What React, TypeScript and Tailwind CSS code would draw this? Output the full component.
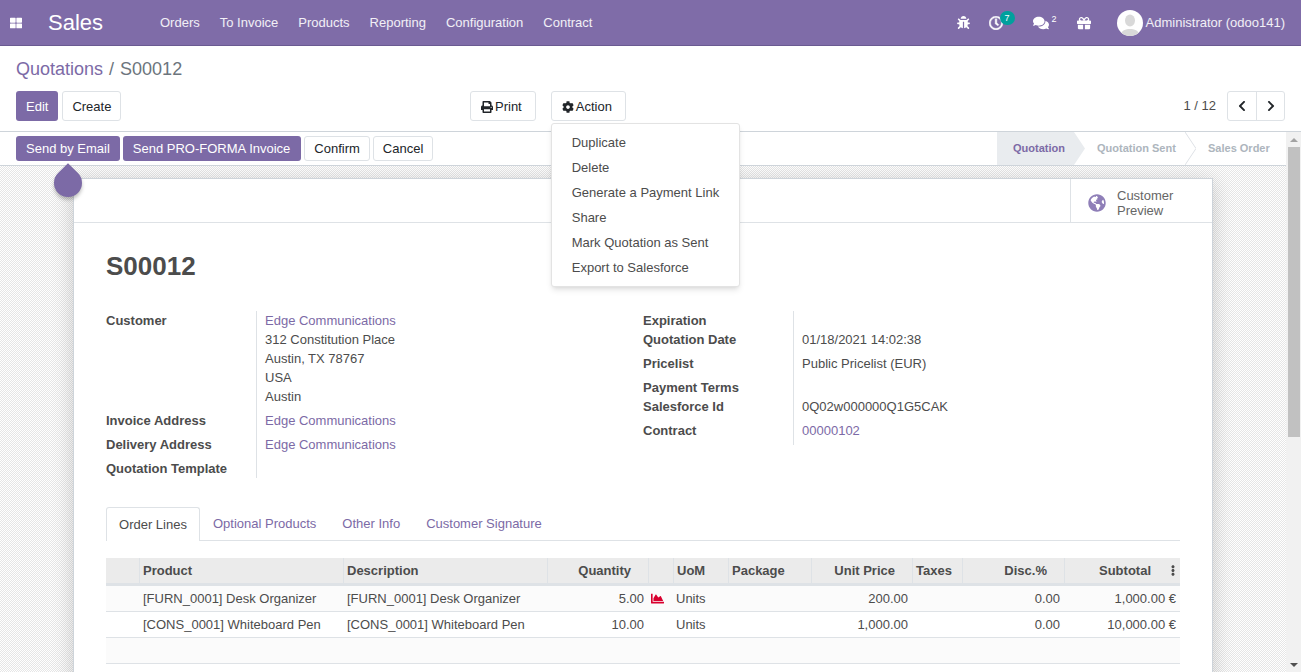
import {
  FaBug,
  FaChartArea,
  FaChevronLeft,
  FaChevronRight,
  FaCog,
  FaComments,
  FaEllipsisV,
  FaGift,
  FaGlobeAmericas,
  FaPrint,
  FaRegClock,
  FaThLarge,
} from 'react-icons/fa';

const menus = ['Orders', 'To Invoice', 'Products', 'Reporting', 'Configuration', 'Contract'];
const actions = [
  'Duplicate',
  'Delete',
  'Generate a Payment Link',
  'Share',
  'Mark Quotation as Sent',
  'Export to Salesforce',
];

const btnWhite = 'h-[30px] pt-[1px] flex items-center bg-white border border-[#dee2e6] rounded-[3px] text-[#212529]';
const btnPurple = 'h-[25px] px-[10px] flex items-center bg-[#7c6aa6] rounded-[3px] text-white';
const btnPurpleLight = 'h-[25px] px-[9px] flex items-center bg-white border border-[#dee2e6] rounded-[3px] text-[#212529]';

function Navbar() {
  return (
    <header className="h-[46px] shrink-0 bg-[#7f6ca8] border-b border-[#6a5a91] flex items-center text-white">
      <FaThLarge className="ml-[10px] w-[12px] h-[12px]" />
      <span className="ml-[26px] w-[112px] text-[22px]">Sales</span>
      <nav className="flex gap-[20px] text-[13px] text-white/90">
        {menus.map((m) => (
          <span key={m}>{m}</span>
        ))}
      </nav>
      <div className="ml-auto flex items-center pr-[16px] text-[13px]">
        <FaBug className="w-[13px] h-[13px]" />
        <div className="relative ml-[19px] w-[32px] h-[16px]">
          <FaRegClock className="w-[14px] h-[14px] mt-[1px] stroke-[20px]" />
          <span className="absolute left-[11px] -top-[4px] w-[15px] h-[14px] rounded-full bg-[#00a09d] text-[9px] leading-[14px] text-center">
            7
          </span>
        </div>
        <FaComments className="ml-[12px] w-[16px] h-[16px]" />
        <span className="relative -top-[3px] ml-[3px] text-[9px]">2</span>
        <FaGift className="ml-[20px] w-[14px] h-[14px]" />
        <div className="ml-[26px] w-[26px] h-[26px] rounded-full bg-white overflow-hidden">
          <svg viewBox="0 0 26 26" className="w-full h-full">
            <ellipse cx="13" cy="10.5" rx="5" ry="6" fill="#d9d9d9" />
            <path d="M3 26c1-6 6-7 10-7s9 1 10 7z" fill="#d9d9d9" />
          </svg>
        </div>
        <span className="ml-[3px] text-white/90">Administrator (odoo141)</span>
      </div>
    </header>
  );
}

function ControlPanel() {
  return (
    <div className="h-[86px] shrink-0 px-[16px] pt-[11px] border-b border-[#ced4da] text-[13px]">
      <div className="text-[18px] leading-[25px]">
        <span className="text-[#7c6aa6]">Quotations</span>
        <span className="ml-[6px] text-[#6c757d]">/</span>
        <span className="ml-[6px] text-[#6c757d]">S00012</span>
      </div>
      <div className="mt-[9px] flex items-center">
        <div className="w-[454px] flex gap-[4px]">
          <button className="h-[30px] pt-[1px] px-[10px] bg-[#7c6aa6] rounded-[3px] text-white">Edit</button>
          <button className={btnWhite + ' px-[9px]'}>Create</button>
        </div>
        <div className="flex gap-[15px]">
          <button className={btnWhite + ' pl-[10px] pr-[13px] gap-[2px]'}>
            <FaPrint className="w-[12px] h-[12px]" />
            Print
          </button>
          <div className="relative">
            <button className={btnWhite + ' pl-[10px] pr-[13px] gap-[2px]'}>
              <FaCog className="w-[12px] h-[12px]" />
              Action
            </button>
            <ul className="absolute z-20 left-0 top-[32px] w-[189px] py-[6px] bg-white border border-[#e3e3e3] rounded-[3px] shadow-md text-[#4c4c4c]">
              {actions.map((a) => (
                <li key={a} className="h-[25px] pl-[20px] leading-[25px]">
                  {a}
                </li>
              ))}
            </ul>
          </div>
        </div>
        <div className="ml-auto flex items-center">
          <span className="mr-[11px] text-[#4c4c4c]">1 / 12</span>
          <div className="flex h-[30px] border border-[#dee2e6] rounded-[3px] text-[#212529]">
            <span className="w-[29px] flex items-center justify-center border-r border-[#dee2e6]">
              <FaChevronLeft className="w-[12px] h-[12px]" />
            </span>
            <span className="w-[27px] flex items-center justify-center">
              <FaChevronRight className="w-[12px] h-[12px]" />
            </span>
          </div>
        </div>
      </div>
    </div>
  );
}

function StatusBar() {
  return (
    <div className="relative z-10 h-[34px] shrink-0 flex items-center border-b border-[#ced4da] bg-white pl-[16px] text-[13px]">
      <div className="flex gap-[3px]">
        <button className={btnPurple}>Send by Email</button>
        <button className={btnPurple + ' pr-[11px]'}>Send PRO-FORMA Invoice</button>
        <button className={btnPurpleLight}>Confirm</button>
        <button className={btnPurpleLight}>Cancel</button>
      </div>
      <div className="absolute right-0 top-0 h-[33px] w-[289px] flex text-[11px] font-bold text-[#adb5bd]">
        <span className="relative w-[77px] pl-[16px] leading-[33px] bg-[#e9ecef] text-[#7c6aa6] whitespace-nowrap">
          Quotation
          <svg viewBox="0 0 11 33" className="absolute -right-[11px] top-0 w-[11px] h-[33px]">
            <path d="M0 0l11 16.500-11 16.500z" fill="#e9ecef" />
          </svg>
        </span>
        <span className="relative w-[111px] pl-[23px] leading-[33px] whitespace-nowrap">
          Quotation Sent
          <svg viewBox="0 0 11 33" className="absolute -right-[11px] top-0 w-[11px] h-[33px]">
            <path d="M0 0l11 16.500-11 16.500" fill="none" stroke="#dee2e6" />
          </svg>
        </span>
        <span className="pl-[23px] leading-[33px] whitespace-nowrap">Sales Order</span>
      </div>
    </div>
  );
}

function FormRow({ label, h, children }: { label: string; h: string; children?: React.ReactNode }) {
  return (
    <div className={'flex ' + h}>
      <div className="w-[150px] shrink-0 font-bold leading-[19px] text-[#4c4c4c]">{label}</div>
      <div className="flex-1 border-l border-[#dee2e6] pl-[8px] leading-[19px] text-[#4c4c4c]">{children}</div>
    </div>
  );
}

const link = 'text-[#7c6aa6]';

function FormHeader() {
  return (
    <div className="mt-[29px] flex text-[13px]">
      <div className="w-[537px] shrink-0">
        <FormRow label="Customer" h="h-[100px]">
          <div className={link}>Edge Communications</div>
          <div>312 Constitution Place</div>
          <div>Austin, TX 78767</div>
          <div>USA</div>
          <div>Austin</div>
        </FormRow>
        <FormRow label="Invoice Address" h="h-[24px]">
          <span className={link}>Edge Communications</span>
        </FormRow>
        <FormRow label="Delivery Address" h="h-[24px]">
          <span className={link}>Edge Communications</span>
        </FormRow>
        <FormRow label="Quotation Template" h="h-[19px]" />
      </div>
      <div className="flex-1">
        <FormRow label="Expiration" h="h-[19px]" />
        <FormRow label="Quotation Date" h="h-[24px]">
          01/18/2021 14:02:38
        </FormRow>
        <FormRow label="Pricelist" h="h-[24px]">
          Public Pricelist (EUR)
        </FormRow>
        <FormRow label="Payment Terms" h="h-[19px]" />
        <FormRow label="Salesforce Id" h="h-[24px]">
          0Q02w000000Q1G5CAK
        </FormRow>
        <FormRow label="Contract" h="h-[24px]">
          <span className={link}>00000102</span>
        </FormRow>
      </div>
    </div>
  );
}

function Tabs() {
  return (
    <div className="mt-[29px] h-[34px] flex border-b border-[#dee2e6] text-[13px]">
      <span className="h-[34px] w-[94px] bg-white border border-b-0 border-[#dee2e6] rounded-t-[3px] text-center leading-[33px] text-[#4c4c4c]">
        Order Lines
      </span>
      <span className={'ml-[13px] leading-[34px] ' + link}>Optional Products</span>
      <span className={'ml-[26px] leading-[34px] ' + link}>Other Info</span>
      <span className={'ml-[26px] leading-[34px] ' + link}>Customer Signature</span>
    </div>
  );
}

const th = 'h-[28px] pl-[3px] pr-[4px] font-bold text-left border-r border-b-[3px] border-r-[#dee2e6] border-b-[#dee2e6] bg-[#ebebeb]';
const td = 'h-[26px] px-[3px] font-normal border-b border-[#dee2e6]';
const tdNum = 'h-[26px] pl-[3px] pr-[5px] font-normal border-b border-[#dee2e6] text-right';

function OrderLines() {
  return (
    <table className="mt-[17px] w-[1074px] table-fixed border-separate border-spacing-0 text-[13px] text-[#4c4c4c]">
      <colgroup>
        <col className="w-[34px]" />
        <col className="w-[204px]" />
        <col className="w-[204px]" />
        <col className="w-[101px]" />
        <col className="w-[25px]" />
        <col className="w-[55px]" />
        <col className="w-[83px]" />
        <col className="w-[101px]" />
        <col className="w-[50px]" />
        <col className="w-[102px]" />
        <col className="w-[115px]" />
      </colgroup>
      <thead>
        <tr>
          <th className={th}></th>
          <th className={th}>Product</th>
          <th className={th}>Description</th>
          <th className={th + ' text-right pr-[17px]'}>Quantity</th>
          <th className={th}></th>
          <th className={th}>UoM</th>
          <th className={th}>Package</th>
          <th className={th + ' text-right pr-[17px]'}>Unit Price</th>
          <th className={th}>Taxes</th>
          <th className={th + ' text-right pr-[17px]'}>Disc.%</th>
          <th className="h-[28px] pl-[4px] pr-[1px] font-bold text-right border-b-[3px] border-[#dee2e6] bg-[#ebebeb]">
            <div className="flex items-center justify-end">
              Subtotal
              <FaEllipsisV className="ml-[16px] w-[12px] h-[11px]" />
            </div>
          </th>
        </tr>
      </thead>
      <tbody>
        <tr className="bg-[#fbfbfb]">
          <td className={td}></td>
          <td className={td + ' whitespace-nowrap'}>[FURN_0001] Desk Organizer</td>
          <td className={td + ' whitespace-nowrap'}>[FURN_0001] Desk Organizer</td>
          <td className={tdNum}>5.00</td>
          <td className={td}>
            <FaChartArea className="-ml-[2px] w-[15px] h-[13px] text-[#d9002f]" />
          </td>
          <td className={td + ' pl-[2px]'}>Units</td>
          <td className={td}></td>
          <td className={tdNum}>200.00</td>
          <td className={td}></td>
          <td className={tdNum}>0.00</td>
          <td className={td + ' text-right pr-[4px]'}>1,000.00 €</td>
        </tr>
        <tr className="bg-white">
          <td className={td}></td>
          <td className={td + ' whitespace-nowrap'}>[CONS_0001] Whiteboard Pen</td>
          <td className={td + ' whitespace-nowrap'}>[CONS_0001] Whiteboard Pen</td>
          <td className={tdNum}>10.00</td>
          <td className={td}></td>
          <td className={td + ' pl-[2px]'}>Units</td>
          <td className={td}></td>
          <td className={tdNum}>1,000.00</td>
          <td className={td}></td>
          <td className={tdNum}>0.00</td>
          <td className={td + ' text-right pr-[4px]'}>10,000.00 €</td>
        </tr>
        <tr className="bg-[#fbfbfb]">
          <td className={td} colSpan={11}></td>
        </tr>
      </tbody>
    </table>
  );
}

function Sheet() {
  return (
    <div className="relative flex-1 min-w-0 bg-[#f5f5f5] bg-[repeating-conic-gradient(#e6e6e6_0%_25%,#ffffff_0%_50%)] bg-[length:2px_2px] pt-[12px]">
      {/* ribbon drop */}
      <div className="absolute z-20 left-[54px] top-[3px] w-[28px] h-[28px] bg-[#7c6aa6] rounded-[50%_0_50%_50%] -rotate-45 shadow-[-2px_2px_4px_rgba(0,0,0,0.25)]"></div>
      <div className="ml-[73px] w-[1140px] h-[600px] bg-white border border-[#ced4da] shadow-[0_4px_20px_rgba(0,0,0,0.18)]">
        <div className="h-[44px] flex justify-end border-b border-[#dee2e6]">
          <div className="w-[142px] flex items-center border-l border-[#dee2e6] pt-[4px] pl-[17px] text-[13px] leading-[15px] text-[#666666]">
            <FaGlobeAmericas className="w-[18px] h-[18px] shrink-0 text-[#8f7fb8]" />
            <span className="ml-[11px]">
              Customer
              <br />
              Preview
            </span>
          </div>
        </div>
        <div className="px-[32px] pt-[27px]">
          <h1 className="text-[26px] leading-[32px] font-bold text-[#4c4c4c]">S00012</h1>
          <FormHeader />
          <Tabs />
          <OrderLines />
        </div>
      </div>
    </div>
  );
}

function Scrollbar() {
  return (
    <div className="w-[15px] shrink-0 flex flex-col items-center bg-[#f1f1f1]">
      <div className="h-[15px] flex items-center">
        <div className="w-0 h-0 border-x-[4px] border-x-transparent border-b-[4px] border-b-[#a3a3a3]"></div>
      </div>
      <div className="w-[12px] h-[290px] bg-[#c1c1c1]"></div>
      <div className="mt-auto h-[15px] flex items-center">
        <div className="w-0 h-0 border-x-[4px] border-x-transparent border-t-[4px] border-t-[#505050]"></div>
      </div>
    </div>
  );
}

export default function App() {
  return (
    <div className="h-[672px] w-[1301px] overflow-hidden flex flex-col bg-white font-['Liberation_Sans',Arial,sans-serif]">
      <Navbar />
      <ControlPanel />
      <div className="flex-1 min-h-0 flex">
        <div className="flex-1 min-w-0 flex flex-col">
          <StatusBar />
          <Sheet />
        </div>
        <Scrollbar />
      </div>
    </div>
  );
}
